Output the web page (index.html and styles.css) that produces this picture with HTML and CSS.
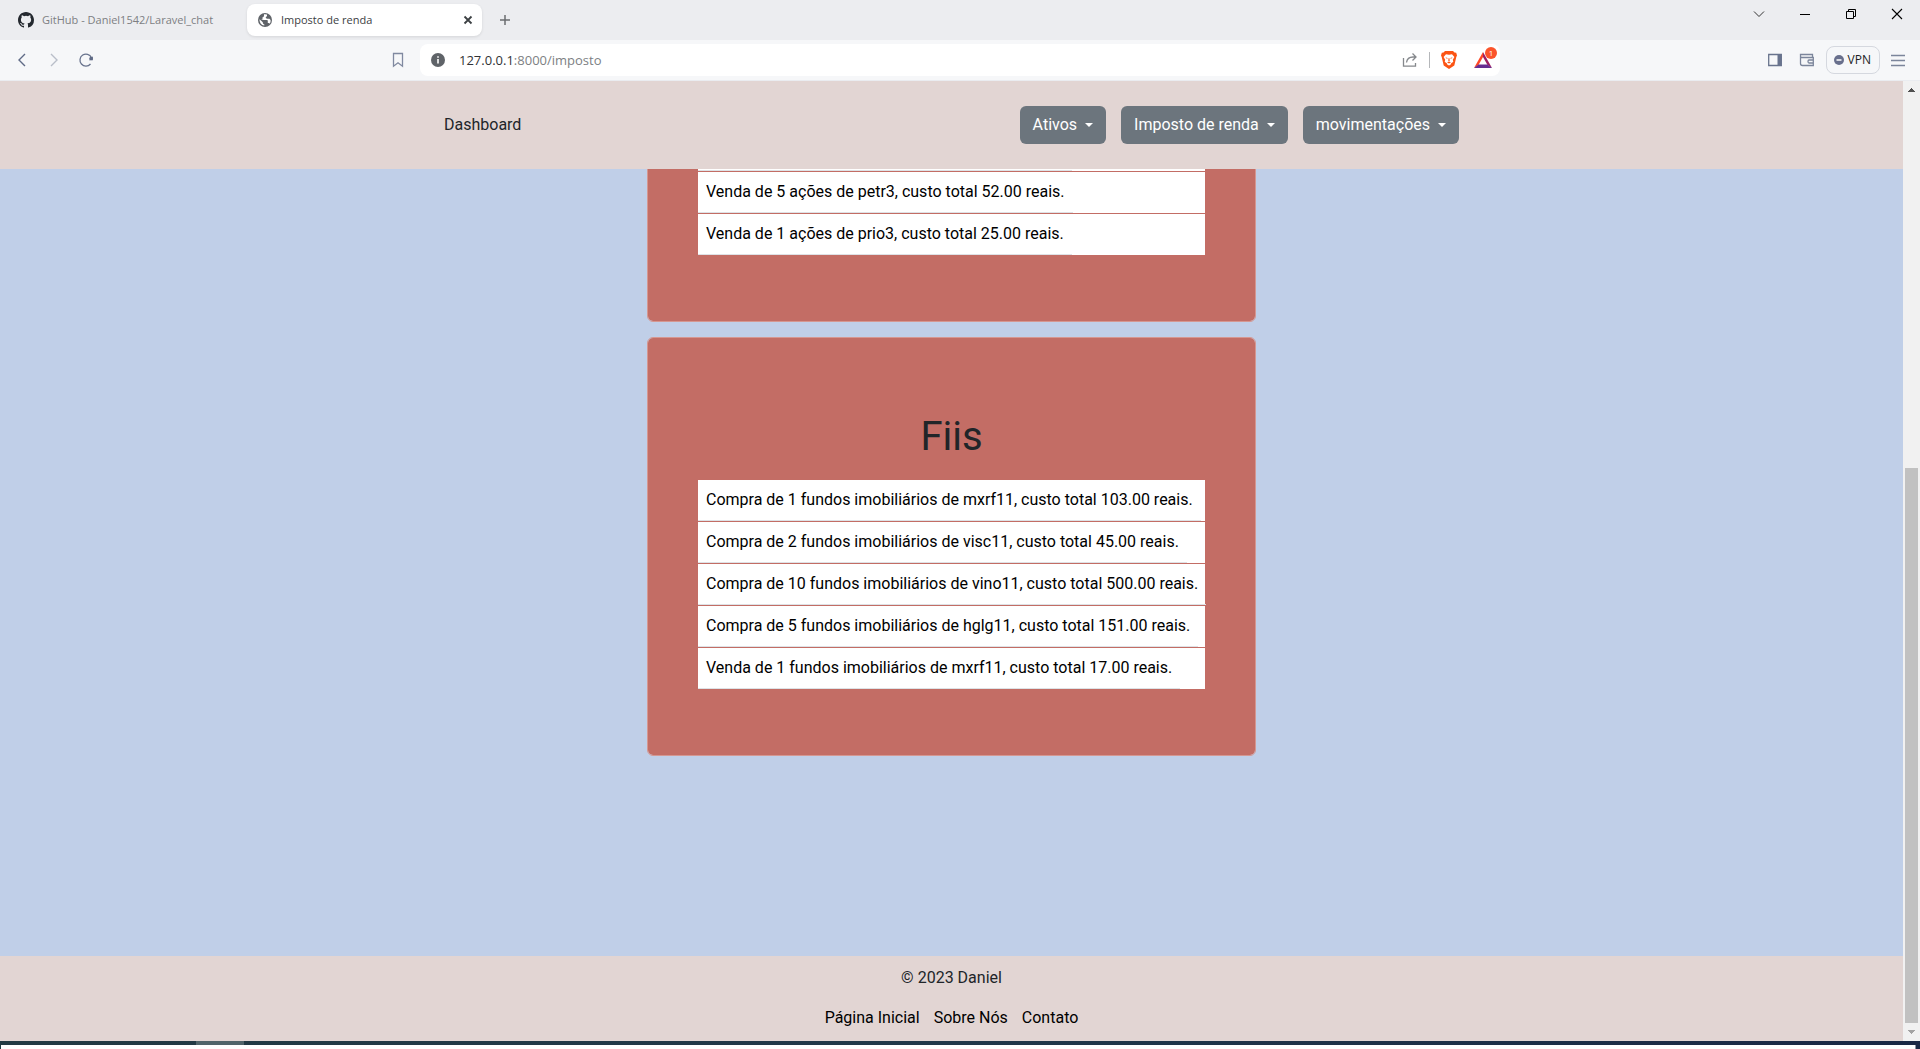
FILE: index.html
```html
<!DOCTYPE html>
<html lang="pt-BR">
<head>
<meta charset="utf-8">
<meta name="viewport" content="width=device-width, initial-scale=1">
<title>Imposto de renda</title>
<link rel="stylesheet" href="styles.css">
</head>
<body>
<div class="tabs">
  <div class="tab">
    <svg width="16" height="16" viewBox="0 0 16 16"><path fill="#24292f" d="M8 0C3.58 0 0 3.58 0 8c0 3.54 2.29 6.53 5.47 7.59.4.07.55-.17.55-.38 0-.19-.01-.82-.01-1.49-2.01.37-2.53-.49-2.69-.94-.09-.23-.48-.94-.82-1.13-.28-.15-.68-.52-.01-.53.63-.01 1.08.58 1.23.82.72 1.21 1.87.87 2.33.66.07-.52.28-.87.51-1.07-1.78-.2-3.64-.89-3.64-3.95 0-.87.31-1.59.82-2.15-.08-.2-.36-1.02.08-2.12 0 0 .67-.21 2.2.82a7.6 7.6 0 0 1 4 0c1.53-1.04 2.2-.82 2.2-.82.44 1.1.16 1.92.08 2.12.51.56.82 1.27.82 2.15 0 3.07-1.87 3.75-3.65 3.95.29.25.54.73.54 1.48 0 1.07-.01 1.93-.01 2.2 0 .21.15.46.55.38A8.01 8.01 0 0 0 16 8c0-4.42-3.58-8-8-8z"/></svg>
    <span>GitHub - Daniel1542/Laravel_chat</span>
  </div>
  <div class="tab tab-active">
    <svg width="16" height="16" viewBox="0 0 16 16"><circle cx="8" cy="8" r="7" fill="#5f6368"/><path fill="#fff" d="M7 2.300v1.500c0 .8-.7 1.500-1.500 1.500v1.400c0 .5-.3.8-.8.8H3.500L7 8h3c.5 0 .8.4.8.8V11h.8c.6 0 1 .3 1.200.8A5.700 5.700 0 0 0 13.600 8l-1.200-1.200H9.800L8.600 5.500 10 4V2.600A5.800 5.800 0 0 0 7 2.300zM2.500 7.300A5.600 5.600 0 0 0 7.300 13.600v-1.300C6.500 12.300 5.800 11.600 5.800 10.800v-.6z"/></svg>
    <span>Imposto de renda</span>
    <button class="icon-btn" aria-label="Fechar guia"><svg width="16" height="16" viewBox="0 0 16 16"><path d="M4.500 4.500l7 7m0-7l-7 7" stroke="#3c4043" stroke-width="1.800"/></svg></button>
  </div>
  <button class="icon-btn new-tab" aria-label="Nova guia"><svg width="16" height="16" viewBox="0 0 16 16"><path d="M8 3v10M3 8h10" stroke="#6b6d70" stroke-width="1.500"/></svg></button>
  <div class="window-controls">
    <button class="icon-btn" aria-label="Pesquisar guias"><svg width="16" height="16" viewBox="0 0 16 16"><path d="M3 5.500l5 5 5-5" fill="none" stroke="#333"/></svg></button>
    <button class="icon-btn" aria-label="Minimizar"><svg width="16" height="16" viewBox="0 0 16 16"><path d="M3 8.500h10" stroke="#000"/></svg></button>
    <button class="icon-btn" aria-label="Restaurar"><svg width="16" height="16" viewBox="0 0 16 16"><path d="M3.500 5.500h7v7h-7zM5.500 5.500v-2h7v7h-2" fill="none" stroke="#000"/></svg></button>
    <button class="icon-btn" aria-label="Fechar"><svg width="16" height="16" viewBox="0 0 16 16"><path d="M3 3l10 10M13 3L3 13" stroke="#000" stroke-width="1.100"/></svg></button>
  </div>
</div>

<div class="toolbar">
  <div class="tools-left">
    <button class="icon-btn" aria-label="Voltar"><svg width="16" height="16" viewBox="0 0 16 16"><path d="M11 2L5 8l6 6" fill="none" stroke="#5f6a86" stroke-width="1.400"/></svg></button>
    <button class="icon-btn" aria-label="Avançar"><svg width="16" height="16" viewBox="0 0 16 16"><path d="M5 2l6 6-6 6" fill="none" stroke="#b9bec9" stroke-width="1.400"/></svg></button>
    <button class="icon-btn" aria-label="Recarregar"><svg width="16" height="16" viewBox="0 0 16 16"><path d="M12.500 12A6 6 0 1 1 13.400 5.500" fill="none" stroke="#68738d" stroke-width="1.300"/><path d="M14.900 4.300v4h-4z" fill="#5f6a86"/><circle cx="13" cy="6.500" r="1.700" fill="#5f6a86"/></svg></button>
    <button class="icon-btn bookmark" aria-label="Favoritos"><svg width="16" height="16" viewBox="0 0 16 16"><path d="M3.500 1.500h9v12.700L8 10.700l-4.500 3.500z" fill="none" stroke="#8089a0" stroke-width="1.300"/></svg></button>
  </div>
  <div class="address">
    <svg width="16" height="16" viewBox="0 0 16 16"><circle cx="8" cy="8" r="7" fill="#5f6368"/><path d="M8 7v4.500M8 4.200v1.600" stroke="#fff" stroke-width="1.600"/></svg>
    <a class="url" href="#top"><b>127.0.0.1</b>:8000/imposto</a>
    <button class="icon-btn" aria-label="Compartilhar"><svg width="16" height="16" viewBox="0 0 16 16"><path d="M1.500 6v8.200h12V11M4.500 10.500C5 6.800 7.500 5 11 5h2.500M10.500 1.500L14 5l-3.500 3.500" fill="none" stroke="#85888c" stroke-width="1.300"/></svg></button>
    <span class="divider"></span>
    <button class="icon-btn" aria-label="Brave Shields"><svg width="18" height="20" viewBox="0 0 18 20"><path fill="#fb5414" d="M5 1h8l1.500 1.500 1.700.2L17 5.500l-.7 1.500-2 8.500L9 19l-5.300-3.500-2-8.500L1 5.500l.8-2.800 1.700-.2z"/><path fill="#fff" d="M6 4.200l3 .5 3-.5 2.400 2.900-1.600 2.700.5 2-2.300 1.700-.2 1L9 15.600l-1.800-1.100-.2-1-2.300-1.700.5-2-1.600-2.700z"/><path fill="#fb5414" d="M5.300 7.200l2.300.7-.5 1zM12.700 7.200l-2.300.7.5 1zM8.700 8h.6l.5 2.600-.8.600-.8-.6zM7 12.200l2-.8 2 .8-2 1.300z"/></svg></button>
    <button class="icon-btn rewards" aria-label="Brave Rewards, 1"><svg width="18" height="18" viewBox="0 0 18 18"><path fill="#ff4724" d="M9 1v5L4.500 14 0 17z"/><path fill="#9e1f63" d="M9 1l9 16-4.500-3L9 6z"/><path fill="#662d91" d="M0 17l4.500-3.500h9L18 17z"/></svg><span class="badge">1</span></button>
  </div>
  <div class="tools-right">
    <button class="icon-btn" aria-label="Painel lateral"><svg width="16" height="16" viewBox="0 0 16 16"><path d="M1.700 2.500h12.600v11H1.700z" fill="none" stroke="#68738d" stroke-width="1.300"/><path d="M10.500 2h4v12h-4z" fill="#68738d"/></svg></button>
    <button class="icon-btn" aria-label="Carteira"><svg width="16" height="16" viewBox="0 0 16 16"><path d="M13.500 5V2.500h-12v9q0 2 2 2h10.800V5.500H3q-1.500 0-1.500-1.500M14.500 8H10q-1 0-1 1.500t1 1.500h4.500" fill="none" stroke="#7b859b" stroke-width="1.300"/></svg></button>
    <button class="vpn"><svg width="10" height="10" viewBox="0 0 10 10"><circle cx="5" cy="5" r="5" fill="#686f8c"/><path d="M2.500 5h5" stroke="#fff" stroke-width="1.500"/></svg>VPN</button>
    <button class="icon-btn" aria-label="Menu"><svg width="16" height="16" viewBox="0 0 16 16"><path d="M1 3.500h14M1 8.500h14M1 13.500h14" stroke="#7b859b" stroke-width="1.300"/></svg></button>
  </div>
</div>

<div class="viewport" id="top">
  <div class="page">
    <header class="site-header">
      <nav class="nav">
        <a class="brand" href="#top">Dashboard</a>
        <div class="menus">
          <button class="menu">Ativos<span class="caret"></span></button>
          <button class="menu">Imposto de renda<span class="caret"></span></button>
          <button class="menu">movimentações<span class="caret"></span></button>
        </div>
      </nav>
    </header>
    <main class="content">
      <section class="card">
        <table class="list">
          <tr><td><span class="entry entry-blank"></span></td></tr>
          <tr><td><span class="entry">Venda de 5 ações de petr3, custo total 52.00 reais.</span></td></tr>
          <tr><td><span class="entry">Venda de 1 ações de prio3, custo total 25.00 reais.</span></td></tr>
        </table>
      </section>
      <section class="card">
        <h1>Fiis</h1>
        <table class="list">
          <tr><td><span class="entry">Compra de 1 fundos imobiliários de mxrf11, custo total 103.00 reais.</span></td></tr>
          <tr><td><span class="entry">Compra de 2 fundos imobiliários de visc11, custo total 45.00 reais.</span></td></tr>
          <tr><td><span class="entry">Compra de 10 fundos imobiliários de vino11, custo total 500.00 reais.</span></td></tr>
          <tr><td><span class="entry">Compra de 5 fundos imobiliários de hglg11, custo total 151.00 reais.</span></td></tr>
          <tr><td><span class="entry">Venda de 1 fundos imobiliários de mxrf11, custo total 17.00 reais.</span></td></tr>
        </table>
      </section>
    </main>
    <footer class="site-footer">
      <p>© 2023 Daniel</p>
      <div class="footer-links">
        <a href="#top">Página Inicial</a>
        <a href="#top">Sobre Nós</a>
        <a href="#top">Contato</a>
      </div>
    </footer>
  </div>
  <div class="scrollbar">
    <svg width="9" height="5" viewBox="0 0 9 5"><path fill="#505050" d="M4 0h1v1h1v1h1v1h1v1H1V3h1V2h1V1h1z"/></svg>
    <div class="track"><div class="thumb"></div></div>
    <svg width="9" height="5" viewBox="0 0 9 5"><path fill="#a3a3a3" d="M1 0h7v1H7v1H6v1H5v1H4V3H3V2H2V1H1z"/></svg>
  </div>
</div>
<div class="desktop-edge"><div class="edge-light"></div></div>
<div class="edge-window"></div>
</body>
</html>
```
FILE: styles.css
```css
* { box-sizing: border-box; }

body {
  margin: 0;
  height: 100vh;
  display: flex;
  flex-direction: column;
  overflow: hidden;
  font: 16px/24px Roboto, "Liberation Sans", sans-serif;
  color: #212529;
}

button { font: inherit; border: 0; cursor: pointer; }
a { color: inherit; text-decoration: none; }
svg { display: block; flex: none; }

.icon-btn {
  display: flex;
  align-items: center;
  justify-content: center;
  flex: none;
  min-width: 16px;
  height: 20px;
  padding: 0;
  background: none;
}

/* Browser tabs */
.tabs {
  display: flex;
  height: 40px;
  flex: none;
  padding: 4px 15px 4px 8px;
  background: #ecedf0;
  font: 11px/16px "Open Sans", "Noto Sans", sans-serif;
}
.tab {
  display: flex;
  align-items: center;
  gap: 8px;
  width: 239px;
  padding: 0 10px;
  color: #7d7f83;
}
.tab span { flex: 1; white-space: nowrap; }
.tab-active {
  width: 235px;
  padding: 0 6px 0 10px;
  background: #fff;
  border-radius: 8px;
  box-shadow: 0 1px 3px rgba(0, 0, 0, .1);
  color: #3c4043;
}
.new-tab { align-self: center; margin-left: 15px; }
.window-controls { display: flex; gap: 30px; margin-left: auto; }

/* Browser toolbar */
.toolbar {
  display: grid;
  grid-template-columns: 420px 1fr 420px;
  align-items: center;
  height: 41px;
  flex: none;
  padding-bottom: 1px;
  background: #f6f7f9;
  box-shadow: inset 0 -1px #eaecf0;
}
.tools-left { display: flex; gap: 16px; padding: 0 14px; }
.bookmark { margin-left: auto; }
.address {
  display: flex;
  align-items: center;
  height: 32px;
  padding: 0 6px 0 10px;
  background: #fff;
  border-radius: 8px;
  font: 13px/20px "Open Sans", "Noto Sans", sans-serif;
  color: #7d7f83;
}
.url { flex: 1; margin-left: 13px; }
.url b { font-weight: 400; color: #303236; }
.divider { width: 1px; height: 16px; margin: 0 10px 0 11px; background: #b5b7ba; }
.rewards { position: relative; margin: 0 2px 0 16px; }
.badge {
  position: absolute;
  top: -3px;
  right: -5px;
  width: 12px;
  height: 12px;
  border-radius: 6px;
  background: #fb542b;
  color: #fff;
  font-size: 8px;
  line-height: 12px;
  text-align: center;
}
.tools-right {
  display: flex;
  justify-content: flex-end;
  align-items: center;
  gap: 16px;
  padding-right: 14px;
}
.vpn {
  display: flex;
  align-items: center;
  gap: 4px;
  height: 28px;
  padding: 0 8px 0 7px;
  margin: 0 -6px 0 -5px;
  border: 1px solid #d5d8df;
  border-radius: 8px;
  background: #f6f7f9;
  color: #1d1f25;
  font: 12px/16px "Open Sans", "Noto Sans", sans-serif;
}

/* Page */
.viewport { display: flex; flex: 1; min-height: 0; }
.page {
  display: flex;
  flex-direction: column;
  flex: 1;
  background: #c0cfe8;
}
.site-header {
  position: relative;
  flex: none;
  padding: 25px 16px;
  background: #e2d5d3;
}
.nav {
  display: flex;
  justify-content: space-between;
  align-items: center;
  max-width: 1015px;
  margin: 0 auto;
}
.menus { display: flex; gap: 15px; }
.menu {
  display: flex;
  align-items: center;
  gap: 8px;
  height: 38px;
  padding: 0 13px;
  border-radius: 6px;
  background: #6c757d;
  color: #fff;
}
.caret {
  border: 4px solid transparent;
  border-top-color: #fff;
  border-bottom: 0;
}

.content {
  display: flex;
  flex-direction: column;
  align-items: center;
  justify-content: flex-end;
  flex: 1;
  gap: 15px;
  min-height: 0;
  padding-bottom: 200px;
  overflow: hidden;
}
.card {
  flex: none;
  padding: 75px 50px 65px;
  border: 1px solid #d59791;
  border-radius: 6px;
  background: #c36d65;
  background-clip: padding-box;
}
.card h1 {
  margin: 0 0 18px;
  font-size: 40px;
  font-weight: 400;
  line-height: 48px;
  text-align: center;
}
.list {
  width: 507px;
  table-layout: fixed;
  border-collapse: separate;
  border-spacing: 0 1px;
  color: #000;
}
.list td { padding: 0; background: #fff; }
.entry {
  display: block;
  width: fit-content;
  height: 41px;
  padding: 8px;
  border-bottom: 1px solid #dee2e6;
  white-space: nowrap;
}
.entry-blank { width: 374px; }

.site-footer {
  flex: none;
  padding: 10px 16px 11px;
  background: #e2d5d3;
  text-align: center;
}
.site-footer p { margin: 0 0 16px; }
.footer-links { display: flex; justify-content: center; gap: 14px; color: #000; }

/* Scrollbar */
.scrollbar {
  display: flex;
  flex-direction: column;
  align-items: center;
  width: 17px;
  padding: 7px 0 6px;
  background: #f1f1f1;
}
.track {
  display: flex;
  flex-direction: column;
  justify-content: flex-end;
  flex: 1;
  padding: 5px 0 7px;
}
.thumb { width: 13px; height: 60%; background: #c1c1c1; }

/* Desktop showing below the window */
.desktop-edge {
  height: 4px;
  flex: none;
  padding-left: 196px;
  background: linear-gradient(90deg, #223a43, #21384a 50%, #1a2845);
}
.edge-light { width: 48px; height: 4px; background: #50646a; }
.edge-window {
  height: 4px;
  flex: none;
  border-left: 1px solid #223a43;
  border-right: 4px solid #1a2845;
  background: #fff;
  box-shadow: inset -1px 0 #8b93a3;
}
```
